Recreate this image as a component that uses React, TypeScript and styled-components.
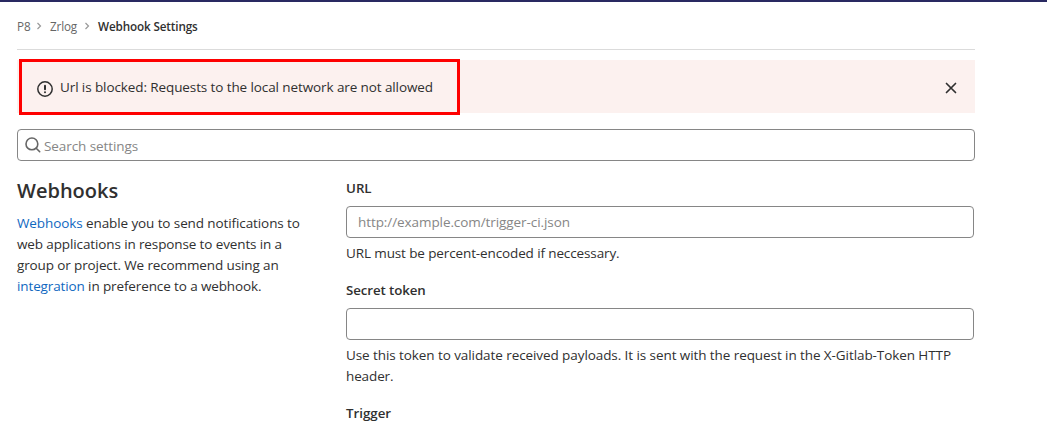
import React from "react";
import styled, { createGlobalStyle } from "styled-components";

const GlobalStyle = createGlobalStyle`
  * { box-sizing: border-box; }
  body {
    margin: 0;
    background: #fff;
    color: #303030;
    font-family: "Open Sans", "Noto Sans", sans-serif;
    font-size: 13.5px;
    line-height: 21px;
    overflow: hidden;
  }
`;

const Page = styled.div`
  height: 425px;
  overflow: hidden;
  border-top: 2px solid #292961;
`;

const Container = styled.main`
  width: 958px;
  margin-left: 17px;
`;

const Breadcrumbs = styled.nav`
  display: flex;
  align-items: center;
  height: 48px;
  padding-top: 2px;
  border-bottom: 1px solid #dbdbdb;
  font-size: 11.7px;
`;

const Crumb = styled.a<{ $width: number }>`
  width: ${(p) => p.$width}px;
  color: #666;
  white-space: nowrap;
  letter-spacing: -0.15px;
`;

const CurrentCrumb = styled.span`
  color: #303030;
  font-weight: 600;
  white-space: nowrap;
  letter-spacing: -0.13px;
`;

const CrumbArrow = styled.svg`
  width: 8px;
  height: 8px;
  margin: 0 7px 2px 5px;
  fill: none;
  stroke: #999;
  stroke-width: 1.2;
`;

const Alert = styled.div`
  position: relative;
  display: flex;
  align-items: center;
  height: 53px;
  margin-top: 10px;
  padding: 0 18px 0 20px;
  background: #fcf1ef;
`;

const AlertIcon = styled.svg`
  width: 16px;
  height: 16px;
  margin: 4px 7px 0 0;
  flex: none;
`;

const AlertText = styled.span`
  flex: 1;
  padding-top: 2px;
  white-space: nowrap;
  letter-spacing: -0.1px;
`;

const CloseButton = styled.button`
  width: 12px;
  height: 12px;
  margin-top: 3px;
  padding: 0;
  border: 0;
  background: none;
  svg { display: block; }
`;

const Highlight = styled.div`
  position: absolute;
  left: 2px;
  top: -1px;
  width: 441px;
  height: 56px;
  border: 3px solid #fe0000;
`;

const Field = styled.div`
  display: flex;
  align-items: center;
  height: 32px;
  border: 1px solid #868686;
  border-radius: 4px;
  background: #fff;
`;

const SearchField = styled(Field)`
  margin-top: 16px;
  padding-left: 7px;
  gap: 3px;
`;

const Input = styled.input<{ $drop?: number }>`
  flex: 1;
  height: 28px;
  padding: ${(p) => p.$drop ?? 0}px 0 0;
  border: 0;
  outline: 0;
  background: none;
  font: inherit;
  letter-spacing: -0.08px;
  &::placeholder { color: #868686; opacity: 1; }
`;

const Columns = styled.div`
  display: grid;
  grid-template-columns: 329px 628px;
`;

const Title = styled.h4`
  margin: 16px 0 9px;
  font-size: 20px;
  line-height: 27px;
  font-weight: 600;
`;

const Line = styled.span<{ $spacing?: number }>`
  display: block;
  white-space: nowrap;
  letter-spacing: ${(p) => p.$spacing ?? -0.12}px;
`;

const Link = styled.a`
  color: #1068bf;
`;

const Label = styled.label<{ $top: number; $spacing?: number }>`
  display: block;
  margin: ${(p) => p.$top}px 0 7px;
  font-size: 13.3px;
  font-weight: 600;
  letter-spacing: ${(p) => p.$spacing ?? 0}px;
`;

const FormField = styled(Field)`
  padding-left: 11px;
`;

const Help = styled.div`
  margin-top: 5px;
`;

const Arrow = () => (
  <CrumbArrow viewBox="0 0 8 8">
    <path d="M2.5 1 5.5 4 2.5 7" />
  </CrumbArrow>
);

export default function App() {
  return (
    <Page>
      <GlobalStyle />
      <Container>
        <Breadcrumbs>
          <Crumb $width={13}>P8</Crumb>
          <Arrow />
          <Crumb $width={28}>Zrlog</Crumb>
          <Arrow />
          <CurrentCrumb>Webhook Settings</CurrentCrumb>
        </Breadcrumbs>
        <Alert>
          <AlertIcon viewBox="0 0 16 16">
            <circle cx="8" cy="8" r="7.2" fill="none" stroke="#303030" strokeWidth="1.5" />
            <path d="M8 4.8v3.4" stroke="#303030" strokeWidth="2" strokeLinecap="round" />
            <circle cx="8" cy="11.2" r="1" fill="#303030" />
          </AlertIcon>
          <AlertText>Url is blocked: Requests to the local network are not allowed</AlertText>
          <CloseButton aria-label="Dismiss">
            <svg width="12" height="12" viewBox="0 0 12 12">
              <path d="M1.5 1.5l9 9M10.5 1.5l-9 9" stroke="#303030" strokeWidth="1.7" strokeLinecap="round" />
            </svg>
          </CloseButton>
          <Highlight />
        </Alert>
        <SearchField>
          <svg width="16" height="16" viewBox="0 0 16 16" fill="none" stroke="#666" strokeWidth="1.6" strokeLinecap="round">
            <circle cx="6.9" cy="6.9" r="5.9" />
            <path d="M11.2 11.2l3.5 3.5" />
          </svg>
          <Input placeholder="Search settings" $drop={2} />
        </SearchField>
        <Columns>
          <section>
            <Title>Webhooks</Title>
            <Line $spacing={-0.1}><Link>Webhooks</Link> enable you to send notifications to</Line>
            <Line>web applications in response to events in a</Line>
            <Line>group or project. We recommend using an</Line>
            <Line><Link>integration</Link> in preference to a webhook.</Line>
          </section>
          <section>
            <Label $top={17}>URL</Label>
            <FormField><Input placeholder="http://example.com/trigger-ci.json" /></FormField>
            <Help><Line>URL must be percent-encoded if neccessary.</Line></Help>
            <Label $top={16} $spacing={-0.1}>Secret token</Label>
            <FormField><Input /></FormField>
            <Help>
              <Line $spacing={-0.08}>Use this token to validate received payloads. It is sent with the request in the X-Gitlab-Token HTTP</Line>
              <Line>header.</Line>
            </Help>
            <Label $top={16}>Trigger</Label>
          </section>
        </Columns>
      </Container>
    </Page>
  );
}
